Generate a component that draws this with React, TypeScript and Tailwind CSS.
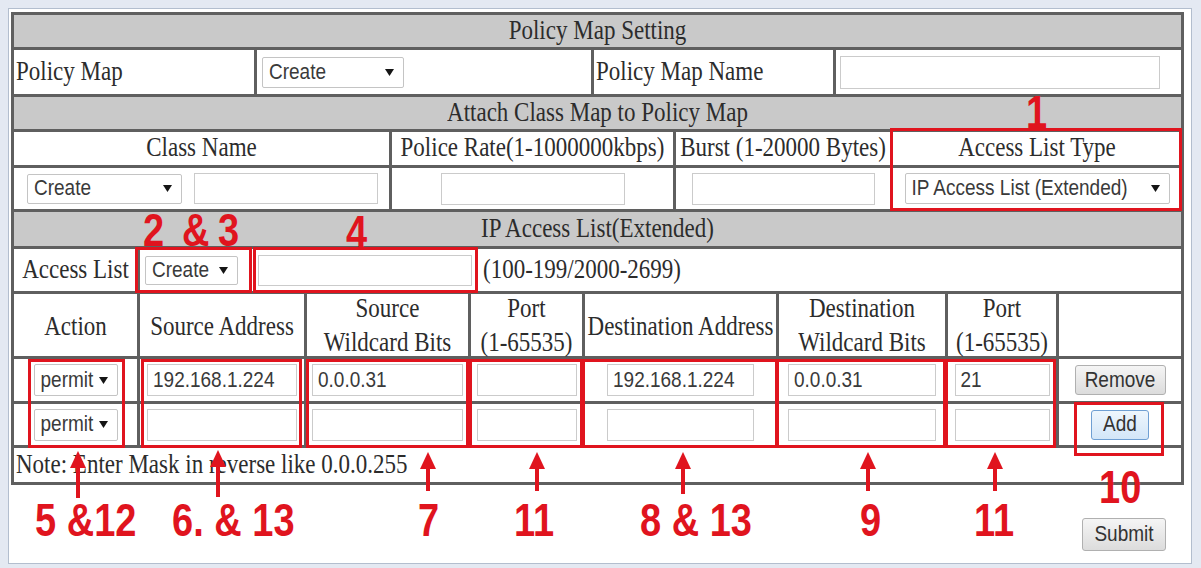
import React from "react";

const serif = "font-['Liberation_Serif','Times_New_Roman',serif]";
const sans = "font-['Liberation_Sans',Arial,sans-serif]";
// glyphs on this form run a bit tall for their width
const tall = "inline-block scale-y-[1.2]";

function Caret() {
  return (
    <svg width="9" height="7" viewBox="0 0 9 7" className="shrink-0">
      <path d="M0 0h9L4.5 7z" fill="#151515" />
    </svg>
  );
}

function Select({ value, className }: { value: string; className: string }) {
  return (
    <div
      className={`${className} flex items-center justify-between rounded-[2px] border border-[#c4c4c4] bg-white pl-[6px] pr-[9px] text-[19px] text-[#3a3a3a] ${sans}`}
    >
      <span className={tall}>{value}</span>
      <Caret />
    </div>
  );
}

function Field({ value = "", className }: { value?: string; className: string }) {
  return (
    <div
      className={`${className} flex items-center border border-[#cbcbcb] bg-white pl-[5px] text-[19px] text-[#3a3a3a] ${sans}`}
    >
      <span className={tall}>{value}</span>
    </div>
  );
}

function Button({ label, className }: { label: string; className: string }) {
  return (
    <button
      type="button"
      className={`${className} flex items-center justify-center rounded-[3px] border text-[19px] text-[#333] ${sans}`}
    >
      <span className={tall}>{label}</span>
    </button>
  );
}

function Heading({ children, className }: { children: React.ReactNode; className: string }) {
  return (
    <div className={`${className} flex items-center justify-center bg-[#c9c9c9]`}>
      <span className={tall}>{children}</span>
    </div>
  );
}

const cell = "flex items-center bg-white";

// widths of the eight columns of the access list rows
const cols = [
  "w-[123px]",
  "w-[164px]",
  "w-[161px]",
  "w-[111px]",
  "w-[191px]",
  "w-[166px]",
  "w-[108px]",
  "flex-1",
];

const ruleHeads: React.ReactNode[] = [
  "Action",
  "Source Address",
  <>Source<br />Wildcard Bits</>,
  <>Port<br />(1-65535)</>,
  "Destination Address",
  <>Destination<br />Wildcard Bits</>,
  <>Port<br />(1-65535)</>,
  "",
];

type Rule = { src: string; srcWild: string; port: string; dst: string; dstWild: string; dstPort: string };

const rules: Rule[] = [
  { src: "192.168.1.224", srcWild: "0.0.0.31", port: "", dst: "192.168.1.224", dstWild: "0.0.0.31", dstPort: "21" },
  { src: "", srcWild: "", port: "", dst: "", dstWild: "", dstPort: "" },
];

function RuleRow({ rule, last }: { rule: Rule; last: boolean }) {
  const fields = [
    <Select value="permit" className="w-[84px] h-[32px]" />,
    <Field value={rule.src} className="w-[150px] h-[32px]" />,
    <Field value={rule.srcWild} className="w-[151px] h-[32px]" />,
    <Field value={rule.port} className="w-[100px] h-[32px]" />,
    <Field value={rule.dst} className="w-[147px] h-[32px]" />,
    <Field value={rule.dstWild} className="w-[148px] h-[32px]" />,
    <Field value={rule.dstPort} className="w-[95px] h-[32px]" />,
    last ? (
      <Button
        label="Add"
        className="w-[58px] h-[30px] border-[#6f9fd3] bg-linear-to-b from-[#eef6fd] to-[#d3e6f8]"
      />
    ) : (
      <Button
        label="Remove"
        className="w-[91px] h-[30px] border-[#b0b0b0] bg-linear-to-b from-[#f5f5f5] to-[#dcdcdc]"
      />
    ),
  ];
  return (
    <div className={`flex gap-[3px] ${last ? "h-[41px]" : "h-[42px]"}`}>
      {fields.map((f, i) => (
        <div key={i} className={`${cols[i]} ${cell} justify-center`}>
          {f}
        </div>
      ))}
    </div>
  );
}

// red callouts drawn over the form
const boxes = [
  "left-[890px] top-[128px] w-[292px] h-[83px]",
  "left-[135px] top-[247px] w-[117px] h-[46px]",
  "left-[253px] top-[247px] w-[225px] h-[46px]",
  "left-[28px] top-[359px] w-[97px] h-[89px]",
  "left-[141px] top-[359px] w-[161px] h-[89px]",
  "left-[306px] top-[359px] w-[163px] h-[89px]",
  "left-[469px] top-[359px] w-[114px] h-[89px]",
  "left-[582px] top-[359px] w-[196px] h-[89px]",
  "left-[776px] top-[359px] w-[170px] h-[89px]",
  "left-[945px] top-[359px] w-[111px] h-[89px]",
  "left-[1074px] top-[402px] w-[90px] h-[54px]",
];

const arrows = [
  "left-[69px] top-[451px] h-[47px]",
  "left-[209px] top-[450px] h-[47px]",
  "left-[419px] top-[452px] h-[39px]",
  "left-[528px] top-[452px] h-[39px]",
  "left-[674px] top-[452px] h-[42px]",
  "left-[859px] top-[452px] h-[39px]",
  "left-[986px] top-[452px] h-[39px]",
];

const labels: [string, string][] = [
  ["1", "left-[1026px] top-[93px]"],
  ["2", "left-[143px] top-[211px]"],
  ["&", "left-[182px] top-[211px]"],
  ["3", "left-[218px] top-[211px]"],
  ["4", "left-[346px] top-[213px]"],
  ["5 &12", "left-[35px] top-[501px]"],
  ["6. & 13", "left-[172px] top-[501px]"],
  ["7", "left-[418px] top-[501px]"],
  ["11", "left-[514px] top-[501px]"],
  ["8 & 13", "left-[640px] top-[501px]"],
  ["9", "left-[860px] top-[501px]"],
  ["11", "left-[974px] top-[501px]"],
  ["10", "left-[1099px] top-[468px]"],
];

function Callouts() {
  return (
    <>
      {boxes.map((b) => (
        <div key={b} className={`absolute ${b} border-[3px] border-[#e0141e]`} />
      ))}
      {arrows.map((a) => (
        <svg key={a} className={`absolute ${a} w-[18px]`}>
          <polygon points="9,0 1,17 17,17" fill="#e0141e" />
          <rect x="7" y="15" width="4" height="100%" fill="#e0141e" />
        </svg>
      ))}
      {labels.map(([t, pos], i) => (
        <span
          key={i}
          className={`absolute ${pos} whitespace-pre text-[38px] font-bold leading-none text-[#e0141e] ${sans} ${tall}`}
        >
          {t}
        </span>
      ))}
    </>
  );
}

export default function App() {
  return (
    <div className="relative h-[568px] w-[1201px] overflow-hidden bg-[#e4e9f2] pl-[8px] pt-[8px]">
      <div className="h-[556px] w-[1184px] border border-[#b3bece] bg-white">
        <div
          className={`ml-[2px] mt-[3px] flex w-[1173px] flex-col gap-[3px] bg-[#5f5f5f] p-[3px] text-[23px] text-[#2c2c2c] ${serif}`}
        >
          <Heading className="h-[32px]">Policy Map Setting</Heading>

          <div className="flex h-[44px] gap-[3px]">
            <div className={`w-[240px] ${cell} pl-[2px]`}>
              <span className={tall}>Policy Map</span>
            </div>
            <div className={`w-[334px] ${cell} pl-[5px]`}>
              <Select value="Create" className="w-[142px] h-[31px]" />
            </div>
            <div className={`w-[239px] ${cell} pl-[2px]`}>
              <span className={tall}>Policy Map Name</span>
            </div>
            <div className={`flex-1 ${cell} pl-[4px]`}>
              <Field className="w-[320px] h-[33px]" />
            </div>
          </div>

          <Heading className="h-[32px]">Attach Class Map to Policy Map</Heading>

          <div className="flex h-[33px] gap-[3px]">
            <div className={`w-[375px] ${cell} justify-center`}>
              <span className={tall}>Class Name</span>
            </div>
            <div className={`w-[281px] ${cell} justify-center`}>
              <span className={tall}>Police Rate(1-1000000kbps)</span>
            </div>
            <div className={`w-[214px] ${cell} justify-center`}>
              <span className={tall}>Burst (1-20000 Bytes)</span>
            </div>
            <div className={`flex-1 ${cell} justify-center`}>
              <span className={tall}>Access List Type</span>
            </div>
          </div>

          <div className="flex h-[41px] gap-[3px]">
            <div className={`w-[375px] ${cell} gap-[12px] pl-[13px]`}>
              <Select value="Create" className="w-[155px] h-[30px]" />
              <Field className="w-[184px] h-[31px]" />
            </div>
            <div className={`w-[281px] ${cell} justify-center`}>
              <Field className="w-[184px] h-[32px]" />
            </div>
            <div className={`w-[214px] ${cell} justify-center`}>
              <Field className="w-[183px] h-[32px]" />
            </div>
            <div className={`flex-1 ${cell} justify-center`}>
              <Select value="IP Access List (Extended)" className="w-[265px] h-[31px]" />
            </div>
          </div>

          <Heading className="h-[34px]">IP Access List(Extended)</Heading>

          <div className="flex h-[42px] gap-[3px]">
            <div className={`w-[123px] ${cell} justify-center`}>
              <span className={tall}>Access List</span>
            </div>
            <div className={`flex-1 ${cell} pl-[5px]`}>
              <Select value="Create" className="w-[93px] h-[29px]" />
              <Field className="ml-[20px] w-[214px] h-[31px]" />
              <span className={`ml-[11px] ${tall}`}>(100-199/2000-2699)</span>
            </div>
          </div>

          <div className="flex h-[62px] gap-[3px]">
            {ruleHeads.map((h, i) => (
              <div key={i} className={`${cols[i]} ${cell} justify-center text-center leading-[29px]`}>
                <span className={tall}>{h}</span>
              </div>
            ))}
          </div>

          {rules.map((r, i) => (
            <RuleRow key={i} rule={r} last={i === rules.length - 1} />
          ))}

          <div className={`h-[34px] ${cell} pl-[2px]`}>
            <span className={tall}>Note: Enter Mask in reverse like 0.0.0.255</span>
          </div>
        </div>

        <div className="mt-[33px] flex justify-end pr-[25px]">
          <Button
            label="Submit"
            className="w-[84px] h-[33px] border-[#b0b0b0] bg-linear-to-b from-[#f5f5f5] to-[#dcdcdc]"
          />
        </div>
      </div>
      <Callouts />
    </div>
  );
}
